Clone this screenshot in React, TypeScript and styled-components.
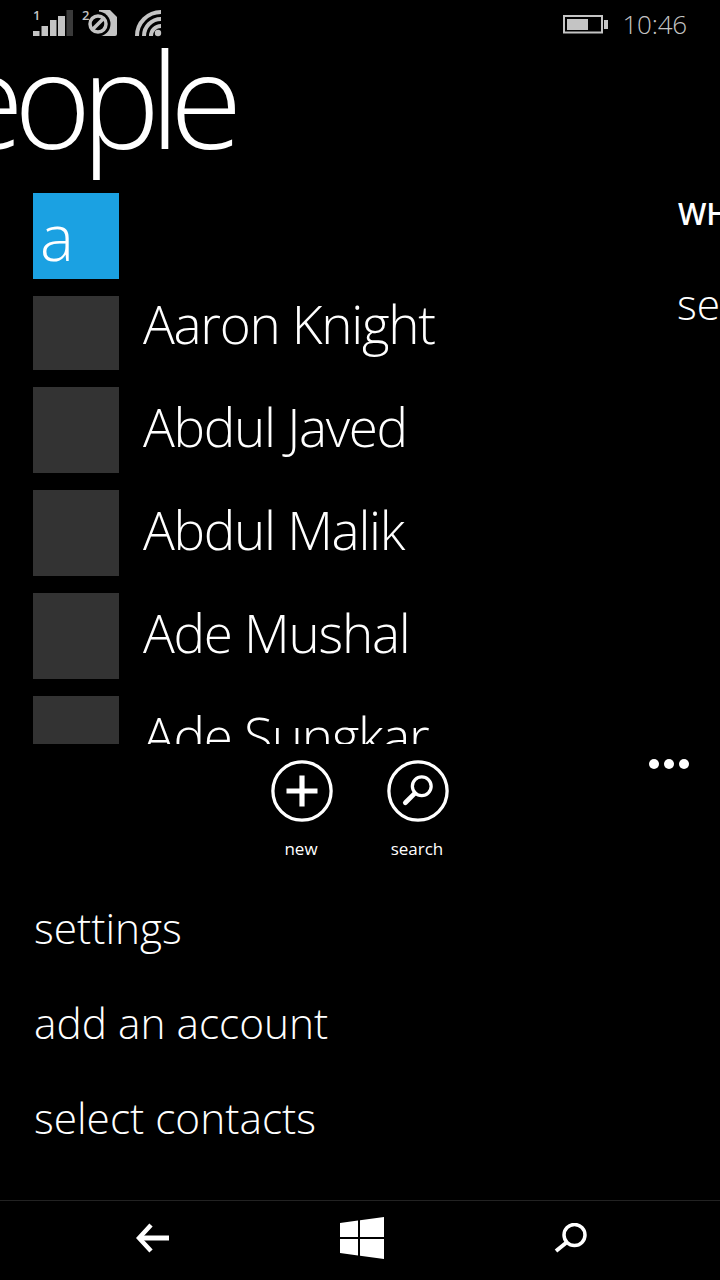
import React from "react"
import styled, { createGlobalStyle } from "styled-components"

const contacts = ["Aaron Knight", "Abdul Javed", "Abdul Malik", "Ade Mushal", "Ade Sungkar"]
const menu = ["settings", "add an account", "select contacts"]

const GlobalStyle = createGlobalStyle`
  html, body {
    margin: 0;
    background: #000;
  }
  body {
    font-family: "Open Sans", "Liberation Sans", sans-serif;
    color: #fff;
  }
`

const Screen = styled.div`
  width: 720px;
  height: 1280px;
  background: #000;
  overflow: hidden;
  display: flex;
  flex-direction: column;
`

const StatusBar = styled.div`
  height: 46px;
  flex: none;
  display: flex;
  align-items: flex-start;
  padding: 8px 33px 0 33px;
  box-sizing: border-box;
  color: #c4c4c4;
`

const StatusIcons = styled.div`
  display: flex;
  align-items: flex-start;
  gap: 7px;
`

const SimSlot = styled.div`
  position: relative;
  height: 30px;
`

const SlotNumber = styled.span`
  position: absolute;
  top: 1px;
  left: 0;
  font-size: 13px;
  font-weight: 600;
  line-height: 12px;
`

const StatusRight = styled.div`
  margin-left: auto;
  display: flex;
  align-items: flex-start;
  gap: 14px;
  height: 32px;
`

const Clock = styled.span`
  font-size: 26px;
  font-weight: 300;
  line-height: 32px;
  letter-spacing: -0.2px;
`

const Hub = styled.div`
  height: 698px;
  flex: none;
  overflow: hidden;
  display: flex;
  flex-direction: column;
`

const Title = styled.h1`
  margin: 0 0 0 -117px;
  height: 147px;
  flex: none;
  font-size: 132px;
  font-weight: 300;
  line-height: 104px;
  letter-spacing: -10px;
  white-space: nowrap;
`

const Panels = styled.div`
  display: flex;
  flex: 1;
  min-height: 0;
`

const ContactList = styled.div`
  width: 678px;
  flex: none;
  padding-left: 33px;
  box-sizing: border-box;
`

const GroupTile = styled.div`
  width: 86px;
  height: 86px;
  background: #1ba1e2;
  font-size: 64px;
  font-weight: 300;
  line-height: 88px;
  padding-left: 7px;
  box-sizing: border-box;
  margin-bottom: 17px;
`

const ContactRow = styled.div<{ $first?: boolean }>`
  display: flex;
  align-items: flex-start;
  gap: 24px;
  height: ${p => (p.$first ? "74px" : "86px")};
  margin-bottom: 17px;
`

const Avatar = styled.div`
  width: 86px;
  height: 100%;
  flex: none;
  background: #333;
`

const ContactName = styled.span<{ $first?: boolean }>`
  font-size: 53px;
  font-weight: 300;
  line-height: 70px;
  letter-spacing: -1.3px;
  margin-top: ${p => (p.$first ? "-7px" : "5px")};
  white-space: nowrap;
`

const SidePanel = styled.div`
  white-space: nowrap;
`

const SideHeading = styled.div`
  font-size: 30px;
  font-weight: 600;
  line-height: 42px;
`

const SideLink = styled.div`
  font-size: 42.5px;
  font-weight: 300;
  line-height: 54px;
  margin-top: 42px;
  margin-left: -1px;
`

const AppBar = styled.div`
  height: 456px;
  flex: none;
  display: flex;
  flex-direction: column;
  position: relative;
`

const Dots = styled.div`
  position: absolute;
  top: 15px;
  right: 31px;
  display: flex;
  gap: 5px;
  span {
    width: 10px;
    height: 10px;
    border-radius: 50%;
    background: #fff;
  }
`

const ActionRow = styled.div`
  display: flex;
  justify-content: center;
  gap: 36px;
  padding-top: 16px;
  height: 117px;
  box-sizing: border-box;
  flex: none;
`

const Action = styled.div`
  width: 80px;
  display: flex;
  flex-direction: column;
  align-items: center;
`

const ActionLabel = styled.span`
  font-size: 17px;
  line-height: 24px;
  margin-top: 15px;
  margin-left: -2px;
`

const Menu = styled.div`
  padding-left: 34px;
  margin-top: 40px;
`

const MenuItem = styled.div`
  font-size: 42.4px;
  font-weight: 300;
  line-height: 54px;
  margin-bottom: 41px;
`

const NavBar = styled.div`
  height: 80px;
  flex: none;
  border-top: 1px solid #222;
  box-sizing: border-box;
  display: flex;
  align-items: center;
  justify-content: space-between;
  padding: 0 132px 5px 136px;
`

const SignalIcon = () => (
  <svg width="42" height="30" viewBox="0 0 42 30" fill="#c4c4c4">
    <rect x="0" y="23" width="6.500" height="5" />
    <rect x="8.500" y="18" width="6.500" height="10" />
    <rect x="17" y="12" width="6.500" height="16" />
    <rect x="25" y="8" width="7" height="20" />
    <rect x="33.500" y="2" width="6.500" height="26" fill="#3a3a3a" />
  </svg>
)

const SimIcon = () => (
  <svg width="46" height="30" viewBox="0 0 46 30">
    <path d="M17 2h11l7 7v17a2 2 0 0 1-2 2H17z" fill="#c4c4c4" />
    <circle cx="16" cy="16" r="12.500" fill="#000" />
    <circle cx="16" cy="16" r="8" fill="none" stroke="#c4c4c4" strokeWidth="3.500" />
    <path d="M11 21L21 11" stroke="#c4c4c4" strokeWidth="3.500" />
  </svg>
)

const WifiIcon = () => (
  <svg width="27" height="30" viewBox="0 0 27 30" fill="none" stroke="#c4c4c4" strokeWidth="4">
    <path d="M2 28A24 24 0 0 1 26 4" />
    <path d="M9 28A17 17 0 0 1 26 11" />
    <path d="M16 28A10 10 0 0 1 26 18" />
    <circle cx="23" cy="25" r="3.200" fill="#c4c4c4" stroke="none" />
  </svg>
)

const BatteryIcon = () => (
  <svg width="45" height="26" viewBox="0 0 45 26">
    <rect x="1" y="8" width="38" height="16.500" fill="none" stroke="#c4c4c4" strokeWidth="2" />
    <rect x="4" y="11" width="21" height="11" fill="#c4c4c4" />
    <rect x="41" y="12" width="4" height="9" fill="#c4c4c4" />
  </svg>
)

const PlusCircle = () => (
  <svg width="66" height="66" viewBox="0 0 66 66" fill="none" stroke="#fff">
    <circle cx="33" cy="33" r="31" strokeWidth="3.500" />
    <path d="M16.500 33h33M33 16.500v33" strokeWidth="5.500" />
  </svg>
)

const SearchCircle = () => (
  <svg width="66" height="66" viewBox="0 0 66 66" fill="none" stroke="#fff">
    <circle cx="33" cy="33" r="31" strokeWidth="3.500" />
    <circle cx="37" cy="28" r="10" strokeWidth="3.500" />
    <path d="M29.500 35.500L19.500 45.500" strokeWidth="5" strokeLinecap="round" />
  </svg>
)

const BackIcon = () => (
  <svg width="34" height="30" viewBox="0 0 34 30" fill="none" stroke="#fff" strokeWidth="5">
    <path d="M33 15H3" />
    <path d="M15 2L3 15l12 13" strokeWidth="4.500" />
  </svg>
)

const WindowsIcon = () => (
  <svg width="44" height="42" viewBox="0 0 44 42" fill="#fff">
    <path d="M0 6l18-2.500V20H0z" />
    <path d="M20 3.200L44 0v20H20z" />
    <path d="M0 22h18v16.500L0 36z" />
    <path d="M20 22h24v20l-24-3.200z" />
  </svg>
)

const SearchIcon = () => (
  <svg width="34" height="30" viewBox="0 0 34 30" fill="none" stroke="#fff">
    <circle cx="20.500" cy="12" r="10.500" strokeWidth="3.500" />
    <path d="M12.500 19.500L2 28" strokeWidth="4" />
  </svg>
)

const App = () => (
  <Screen>
    <GlobalStyle />
    <StatusBar>
      <StatusIcons>
        <SimSlot>
          <SignalIcon />
          <SlotNumber>1</SlotNumber>
        </SimSlot>
        <SimSlot>
          <SimIcon />
          <SlotNumber>2</SlotNumber>
        </SimSlot>
        <WifiIcon />
      </StatusIcons>
      <StatusRight>
        <BatteryIcon />
        <Clock>10:46</Clock>
      </StatusRight>
    </StatusBar>
    <Hub>
      <Title>people</Title>
      <Panels>
        <ContactList>
          <GroupTile>a</GroupTile>
          {contacts.map((name, i) => (
            <ContactRow key={name} $first={i === 0}>
              <Avatar />
              <ContactName $first={i === 0}>{name}</ContactName>
            </ContactRow>
          ))}
        </ContactList>
        <SidePanel>
          <SideHeading>WHAT'S NEW</SideHeading>
          <SideLink>set up</SideLink>
        </SidePanel>
      </Panels>
    </Hub>
    <AppBar>
      <Dots>
        <span />
        <span />
        <span />
      </Dots>
      <ActionRow>
        <Action>
          <PlusCircle />
          <ActionLabel>new</ActionLabel>
        </Action>
        <Action>
          <SearchCircle />
          <ActionLabel>search</ActionLabel>
        </Action>
      </ActionRow>
      <Menu>
        {menu.map(item => (
          <MenuItem key={item}>{item}</MenuItem>
        ))}
      </Menu>
    </AppBar>
    <NavBar>
      <BackIcon />
      <WindowsIcon />
      <SearchIcon />
    </NavBar>
  </Screen>
)

export default App
